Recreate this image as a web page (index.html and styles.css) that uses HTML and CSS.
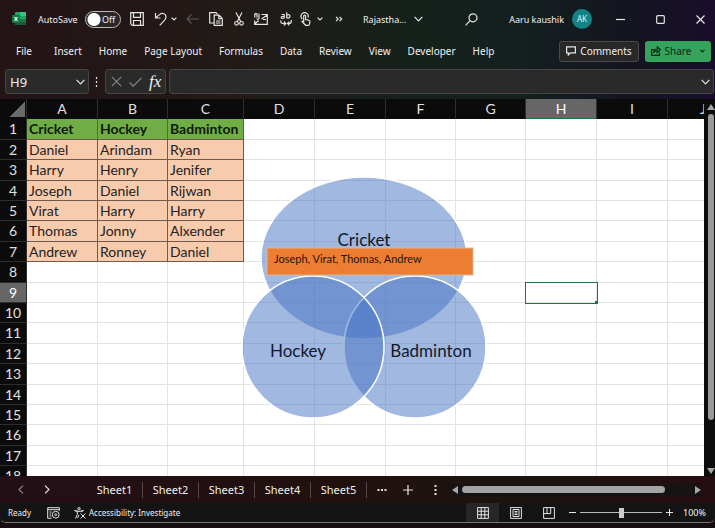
FILE: index.html
```html
<!DOCTYPE html>
<html lang="en">
<head>
    <meta charset="UTF-8">
    <meta name="viewport" content="width=device-width, initial-scale=1.0">
    <title>Rajastha... - Excel</title>
    <link rel="stylesheet" href="styles.css">
</head>
<body>
    <div class="window">
        <header class="title-bar">
            <svg class="logo" width="14" height="14" viewBox="0 0 14 14">
                <rect x="3" y="0" width="11" height="13" rx="1" fill="#21a366"/>
                <rect x="8" y="0" width="6" height="4" fill="#33c481"/>
                <rect x="3" y="7" width="11" height="6" fill="#185c37"/>
                <rect x="8" y="7" width="6" height="3" fill="#107c41"/>
                <rect x="0" y="3" width="8" height="8" rx="1" fill="#107c41"/>
                <path d="M2.5 5l3 4M5.5 5l-3 4" stroke="#fff" fill="none"/>
            </svg>
            <label class="autosave" for="autosave">AutoSave</label>
            <span class="toggle">
                <input type="checkbox" id="autosave">
                <span>Off</span>
            </span>
            <div class="quick-tools">
                <button type="button" aria-label="Save"><svg width="14" height="14" viewBox="0 0 14 14"><path d="M.7.7h12.6v12.6H2.2L.7 11.8zM3.5.7v4.6h7V.7M3.5 13.3V8.5h7v4.8"/></svg></button>
                <button type="button" class="undo" aria-label="Undo"><svg width="14" height="14" viewBox="0 0 14 14"><path d="M1.5 1v5h5M1.7 5.8L5.5 2.6C8 .5 12 1.500 12 5c0 2-1 3-2.200 4.200L5.700 13.300"/></svg></button>
                <button type="button" class="drop" aria-label="Undo list"><svg width="6" height="6" viewBox="0 0 6 6"><path d="M.6 1.600l2.400 2.400 2.400-2.400"/></svg></button>
                <button type="button" class="faded" aria-label="Back"><svg width="13" height="14" viewBox="0 0 13 14"><path d="M13 7H1M5.500 2.500L1 7l4.500 4.500"/></svg></button>
                <button type="button" aria-label="Copy"><svg width="14" height="14" viewBox="0 0 14 14"><path d="M5 11H.7V.7H7l1.500 1.500M5.200 3.200h4.800l3.300 3.300v6.800H5.200zM9.800 3.300v3.400h3.400M7 9h4.500M7 11h4.500"/></svg></button>
                <button type="button" class="cut" aria-label="Cut"><svg width="10" height="14" viewBox="0 0 10 14"><path d="M2 .5l4.700 9M8 .5l-4.700 9"/><circle cx="2.500" cy="11.300" r="1.800"/><circle cx="7.500" cy="11.300" r="1.800"/></svg></button>
                <button type="button" aria-label="Mail"><svg width="14" height="12" viewBox="0 0 14 12"><path d="M7.500 1.500h5.800v9.800H.7V7.500M7.500 6L13.300 2M.7 11l4-3.500M9 6.500h3M.8 4.500V1.500C.8.200 3 .2 3 1.500v3M5 .5v4.500c0 1.500-2.200 1.500-2.200.500"/></svg></button>
                <button type="button" class="replace" aria-label="Replace"><svg width="12" height="14" viewBox="0 0 12 14"><path d="M1.500 2.500h2.700v4M4.200 4.500H2.500C.8 4.500.8 6.500 2.500 6.500c1 0 1.700-.5 1.700-1.200M6.700.3v6M6.700 4c0-2 3.300-2 3.300.3s-3.300 2.300-3.300.3M1 8.500c-.6 2 .2 3 1.800 3h2.700M3.800 9.500l2 2-2 2M11.200 8v1.500c0 1.300-.8 2-2 2H7.700M9.300 9.700l-1.800 1.800 1.800 1.800"/></svg></button>
                <button type="button" class="touch" aria-label="Touch mode"><svg width="11" height="14" viewBox="0 0 11 14"><path d="M2.300 7A3.600 3.600 0 1 1 8 5.500M3.700 9V4c0-1.300 1.900-1.300 1.900 0v3.500l3 .7c1 .3 1.500.8 1.400 1.800l-.5 2.200c-.2.700-.6 1.100-1.300 1.100H5.700L2 9.700c.3-.7 1-.9 1.700-.3z"/></svg></button>
                <button type="button" class="drop touch-drop" aria-label="Touch mode list"><svg width="6" height="6" viewBox="0 0 6 6"><path d="M.6 1.600l2.400 2.400 2.400-2.400"/></svg></button>
                <button type="button" class="more" aria-label="More commands"><svg width="8" height="6" viewBox="0 0 8 6"><path d="M1 .8l2.200 2.200L1 5.200M4.500 .8l2.200 2.200-2.200 2.200"/></svg></button>
            </div>
            <button type="button" class="file-name">Rajastha...
                <svg width="9" height="6" viewBox="0 0 9 6"><path d="M.6.800l3.900 4 3.900-4"/></svg>
            </button>
            <div class="title-end">
                <button type="button" aria-label="Search"><svg width="13" height="13" viewBox="0 0 13 13"><circle cx="8" cy="4.800" r="4"/><path d="M5 7.700L.6 12.300"/></svg></button>
                <span class="user">Aaru kaushik</span>
                <span class="avatar">AK</span>
                <button type="button" class="win" aria-label="Minimize"><svg width="9" height="9" viewBox="0 0 9 9"><path d="M0 4.500h9"/></svg></button>
                <button type="button" class="win" aria-label="Maximize"><svg width="9" height="9" viewBox="0 0 9 9"><rect x=".7" y=".7" width="7.600" height="7.600" rx="1"/></svg></button>
                <button type="button" class="win" aria-label="Close"><svg width="9" height="9" viewBox="0 0 9 9"><path d="M.5.500l8 8M8.500.500l-8 8"/></svg></button>
            </div>
        </header>

        <nav class="menu">
            <a href="#">File</a>
            <a href="#">Insert</a>
            <a href="#">Home</a>
            <a href="#">Page Layout</a>
            <a href="#">Formulas</a>
            <a href="#">Data</a>
            <a href="#">Review</a>
            <a href="#">View</a>
            <a href="#">Developer</a>
            <a href="#">Help</a>
            <div class="menu-end">
                <button type="button" class="comments"><svg width="10" height="10" viewBox="0 0 10 10"><path d="M.6.800h8.800v6H4.500L2.300 9V6.800H.6z"/></svg>Comments</button>
                <button type="button" class="share"><svg width="10" height="10" viewBox="0 0 10 10"><path d="M3 3.500H.7v5.900h7.800V6.500M2.500 6.500C3 4 4.500 3 6.300 3V.8l3 2.900-3 2.800V4.800c-1.500 0-2.800.5-3.800 1.700z"/></svg>Share<svg class="share-drop" width="5" height="4" viewBox="0 0 5 4"><path d="M.5.800l2 2 2-2"/></svg></button>
            </div>
        </nav>

        <div class="formula-bar">
            <div class="name-box">
                <input type="text" value="H9" aria-label="Name box">
                <svg width="9" height="6" viewBox="0 0 9 6"><path d="M.6.800l3.900 4 3.900-4"/></svg>
            </div>
            <svg class="grip" width="3" height="10" viewBox="0 0 3 10"><path d="M1.500 0v2M1.500 4v2M1.500 8v2"/></svg>
            <div class="fx-box">
                <svg class="dim" width="11" height="11" viewBox="0 0 11 11"><path d="M.8.800l9.400 9.400M10.200.800L.8 10.200"/></svg>
                <svg class="dim" width="13" height="10" viewBox="0 0 13 10"><path d="M.6 5.500l3.600 3.600L12.400.800"/></svg>
                <span class="fx">fx</span>
            </div>
            <div class="formula">
                <input type="text" aria-label="Formula">
                <svg width="9" height="6" viewBox="0 0 9 6"><path d="M.6.800l3.900 4 3.900-4"/></svg>
            </div>
        </div>

        <main class="sheet">
            <div class="grid-area">
                <table class="cells">
                    <colgroup>
                        <col class="w-num"><col class="w-71"><col class="w-70"><col class="w-76"><col class="w-71"><col class="w-71"><col class="w-70"><col class="w-70"><col class="w-71"><col class="w-71"><col class="w-71">
                    </colgroup>
                    <thead>
                        <tr><th class="corner"></th><th>A</th><th>B</th><th>C</th><th>D</th><th>E</th><th>F</th><th>G</th><th class="current">H</th><th>I</th><th>J</th></tr>
                    </thead>
                    <tbody>
                        <tr class="heading"><th>1</th><td>Cricket</td><td>Hockey</td><td>Badminton</td><td></td><td></td><td></td><td></td><td></td><td></td><td></td></tr>
                        <tr class="names"><th>2</th><td>Daniel</td><td>Arindam</td><td>Ryan</td><td></td><td></td><td></td><td></td><td></td><td></td><td></td></tr>
                        <tr class="names"><th>3</th><td>Harry</td><td>Henry</td><td>Jenifer</td><td></td><td></td><td></td><td></td><td></td><td></td><td></td></tr>
                        <tr class="names"><th>4</th><td>Joseph</td><td>Daniel</td><td>Rijwan</td><td></td><td></td><td></td><td></td><td></td><td></td><td></td></tr>
                        <tr class="names"><th>5</th><td>Virat</td><td>Harry</td><td>Harry</td><td></td><td></td><td></td><td></td><td></td><td></td><td></td></tr>
                        <tr class="names"><th>6</th><td>Thomas</td><td>Jonny</td><td>Alxender</td><td></td><td></td><td></td><td></td><td></td><td></td><td></td></tr>
                        <tr class="names"><th>7</th><td>Andrew</td><td>Ronney</td><td>Daniel</td><td></td><td></td><td></td><td></td><td></td><td></td><td></td></tr>
                        <tr><th>8</th><td></td><td></td><td></td><td></td><td></td><td></td><td></td><td></td><td></td><td></td></tr>
                        <tr><th class="current">9</th><td></td><td></td><td></td><td></td><td></td><td></td><td></td><td class="selected"></td><td></td><td></td></tr>
                        <tr><th>10</th><td></td><td></td><td></td><td></td><td></td><td></td><td></td><td></td><td></td><td></td></tr>
                        <tr><th>11</th><td></td><td></td><td></td><td></td><td></td><td></td><td></td><td></td><td></td><td></td></tr>
                        <tr><th>12</th><td></td><td></td><td></td><td></td><td></td><td></td><td></td><td></td><td></td><td></td></tr>
                        <tr><th>13</th><td></td><td></td><td></td><td></td><td></td><td></td><td></td><td></td><td></td><td></td></tr>
                        <tr><th>14</th><td></td><td></td><td></td><td></td><td></td><td></td><td></td><td></td><td></td><td></td></tr>
                        <tr><th>15</th><td></td><td></td><td></td><td></td><td></td><td></td><td></td><td></td><td></td><td></td></tr>
                        <tr><th>16</th><td></td><td></td><td></td><td></td><td></td><td></td><td></td><td></td><td></td><td></td></tr>
                        <tr><th>17</th><td></td><td></td><td></td><td></td><td></td><td></td><td></td><td></td><td></td><td></td></tr>
                        <tr><th>18</th><td></td><td></td><td></td><td></td><td></td><td></td><td></td><td></td><td></td><td></td></tr>
                    </tbody>
                </table>
                <!-- venn diagram floating over the cells -->
                <svg class="venn" width="246" height="244" viewBox="0 0 246 244">
                    <g class="sets">
                        <ellipse cx="123" cy="82" rx="103" ry="81"/>
                        <circle cx="174" cy="171" r="71"/>
                        <circle cx="72" cy="171" r="71"/>
                    </g>
                    <text x="123" y="70">Cricket</text>
                    <rect class="note" x="26" y="72" width="206" height="27"/>
                    <text class="note-text" x="33" y="87">Joseph, Virat, Thomas, Andrew</text>
                    <text x="57" y="181">Hockey</text>
                    <text x="190" y="181">Badminton</text>
                </svg>
            </div>
            <div class="v-scroll">
                <svg width="8" height="6" viewBox="0 0 8 6"><path d="M4 0l4 6H0z"/></svg>
                <div class="v-thumb"></div>
                <svg width="8" height="6" viewBox="0 0 8 6"><path d="M4 6l4-6H0z"/></svg>
            </div>
        </main>

        <div class="tabs">
            <button type="button" class="prev" aria-label="Previous sheet"><svg width="6" height="9" viewBox="0 0 6 9"><path d="M5 .6L1 4.500l4 3.900"/></svg></button>
            <button type="button" class="next" aria-label="Next sheet"><svg width="6" height="9" viewBox="0 0 6 9"><path d="M1 .6l4 3.900-4 3.900"/></svg></button>
            <div class="tab-list">
                <button type="button">Sheet1</button>
                <button type="button">Sheet2</button>
                <button type="button">Sheet3</button>
                <button type="button">Sheet4</button>
                <button type="button">Sheet5</button>
            </div>
            <button type="button" class="dots" aria-label="All sheets"><svg width="10" height="10" viewBox="0 0 10 10"><path class="fat" d="M.5 5h2M4 5h2M7.500 5h2"/></svg></button>
            <button type="button" aria-label="New sheet"><svg width="10" height="10" viewBox="0 0 10 10"><path d="M0 5h10M5 0v10"/></svg></button>
            <button type="button" class="dots-v" aria-label="Resize"><svg width="3" height="10" viewBox="0 0 3 10"><path class="fat" d="M1.500 0v2M1.500 4v2M1.500 8v2"/></svg></button>
            <div class="h-scroll">
                <svg width="6" height="8" viewBox="0 0 6 8"><path d="M0 4l6-4v8z"/></svg>
                <div class="h-thumb"></div>
                <svg width="6" height="8" viewBox="0 0 6 8"><path d="M6 4L0 0v8z"/></svg>
            </div>
        </div>

        <footer class="status">
            <span>Ready</span>
            <svg class="macro" width="13" height="12" viewBox="0 0 13 12"><path d="M4.500 11.300H.7V.7h11.600v3M.7 2.700h11.600M2.500 5h2M2.500 7h1.500M2.500 9h2"/><circle cx="8.700" cy="7.700" r="3.400"/><circle cx="8.700" cy="7.700" r="1"/></svg>
            <svg width="12" height="12" viewBox="0 0 12 12"><circle cx="5" cy="1.700" r="1.200"/><path d="M.5 3.500l2.800 1v3L1.500 11.500M.5 3.500l4.500 1 4.500-1-2.500 1.500M3.500 11L5 8M6.500 6.500l5 5M11.500 6.500l-5 5"/></svg>
            <span class="access">Accessibility: Investigate</span>
            <div class="status-end">
                <button type="button" class="view on" aria-label="Normal"><svg width="12" height="12" viewBox="0 0 12 12"><path d="M.6.600h10.800v10.800H.6zM.6 4.200h10.800M.6 7.800h10.800M4.200.600v10.800M7.800.600v10.800"/></svg></button>
                <button type="button" class="view" aria-label="Page layout"><svg width="12" height="12" viewBox="0 0 12 12"><path d="M.6.600h10.800v10.800H.6zM3 2.500h6v7H3zM4.500 4.500h3M4.500 6h3M4.500 7.500h3"/></svg></button>
                <button type="button" class="view" aria-label="Page break preview"><svg width="12" height="12" viewBox="0 0 12 12"><path d="M.6.600h10.800v10.800H.6zM4 .6v6M7.700.600v6M.6 6.600h7.100"/></svg></button>
                <button type="button" class="step" aria-label="Zoom out"><svg width="7" height="7" viewBox="0 0 7 7"><path d="M0 3.500h7"/></svg></button>
                <input type="range" class="zoom" min="0" max="100" value="50" aria-label="Zoom">
                <button type="button" class="step" aria-label="Zoom in"><svg width="7" height="7" viewBox="0 0 7 7"><path d="M0 3.500h7M3.500 0v7"/></svg></button>
                <span class="percent">100%</span>
            </div>
        </footer>
    </div>
</body>
</html>
```
FILE: styles.css
```css
* {
    box-sizing: border-box;
}

body {
    margin: 0;
    height: 100vh;
    padding-bottom: 5px;
    overflow: hidden;
    background-color: #160d10;
    font-family: "Noto Sans", "Open Sans", sans-serif;
    font-size: 11px;
    color: #f0f0f0;
}

.window {
    display: flex;
    flex-direction: column;
    height: 100%;
    border-bottom: 1px solid #777;
    border-radius: 0 0 6px 6px;
    overflow: hidden;
    background: linear-gradient(90deg, #241416 0%, #211a17 32%, #16211b 58%, #14201f 72%, #14151f 88%, #190d2c 100%);
}

button {
    display: flex;
    align-items: center;
    justify-content: center;
    padding: 0;
    border: none;
    background: none;
    color: inherit;
    font: inherit;
    cursor: pointer;
}

input {
    min-width: 0;
    border: none;
    outline: none;
    background: none;
    color: inherit;
    font: inherit;
}

svg {
    flex: none;
    fill: none;
    stroke: #e4e4e4;
    stroke-width: 1.2;
}

/* title bar */
.title-bar {
    display: flex;
    align-items: center;
    height: 38px;
    padding-left: 12px;
    font-size: 9px;
}

.logo {
    stroke: none;
}

.autosave {
    width: 46px;
    margin-left: 12px;
    white-space: nowrap;
}

.toggle {
    position: relative;
    margin-left: 1px;
    width: 36px;
    height: 17px;
}

.toggle input {
    appearance: none;
    display: block;
    width: 36px;
    height: 17px;
    margin: 0;
    border: 1px solid #bbb;
    border-radius: 9px;
    background: radial-gradient(circle at 8px 50%, #fff 6px, #2b2627 7px);
}

.toggle span {
    position: absolute;
    left: 17px;
    top: 2px;
    line-height: 13px;
    pointer-events: none;
}

.quick-tools {
    display: flex;
    align-items: center;
    gap: 10px;
    margin-left: 9px;
}

.quick-tools .drop {
    margin-left: -7px;
}

.quick-tools .faded {
    margin-left: -1px;
}

.quick-tools .replace,
.quick-tools .more {
    margin-left: 2px;
}

.quick-tools .cut {
    margin-left: 1px;
}

.quick-tools .touch {
    margin-left: -2px;
}

.quick-tools .touch-drop {
    margin-left: -4px;
}

.faded svg {
    stroke: #5b5654;
}

.file-name {
    gap: 8px;
    margin-left: 20px;
}

.title-end {
    display: flex;
    align-items: center;
    margin-left: auto;
    padding-right: 10px;
}

.user {
    margin-left: 31px;
    white-space: nowrap;
}

.avatar {
    width: 20px;
    margin-left: 8px;
    border-radius: 50%;
    background-color: #118488;
    font-size: 8px;
    line-height: 20px;
    text-align: center;
}

.win {
    margin-left: 31px;
}

.avatar + .win {
    margin-left: 24px;
}

/* ribbon menu */
.menu {
    display: flex;
    align-items: center;
    gap: 17px;
    height: 28px;
    padding: 0 4px 2px 16px;
    font-size: 10px;
}

.menu a {
    color: inherit;
    text-decoration: none;
    white-space: nowrap;
}

.menu a:first-child {
    margin-right: 5px;
}

.menu-end {
    display: flex;
    gap: 6px;
    margin-left: auto;
}

.comments,
.share {
    height: 21px;
    border-radius: 3px;
}

.comments {
    gap: 4px;
    width: 80px;
    border: 1px solid #4a4a4a;
    background-color: #282828;
}

.share {
    gap: 4px;
    width: 66px;
    background-color: #35a35c;
    color: #0b2a16;
}

.share svg {
    stroke: #0b2a16;
}

.share-drop {
    margin-left: 5px;
}

/* formula bar */
.formula-bar {
    display: flex;
    align-items: center;
    height: 33px;
    padding: 0 1px 2px 5px;
}

.name-box,
.fx-box,
.formula {
    display: flex;
    align-items: center;
    height: 25px;
    border: 1px solid #454343;
    border-radius: 3px;
    background-color: #2a2a2b;
}

.name-box {
    width: 84px;
    padding: 0 3px;
}

.name-box input {
    flex: 1;
    padding: 0 1px;
    font-size: 13px;
}

.grip {
    margin: 0 7px 0 6px;
}

.fx-box {
    gap: 7px;
    width: 61px;
    padding-left: 5px;
}

.dim {
    stroke: #858585;
}

.fx {
    font-family: "Liberation Serif", serif;
    font-size: 17px;
    font-style: italic;
}

.formula {
    flex: 1;
    margin-left: 3px;
    padding-right: 3px;
}

.formula input {
    flex: 1;
}

/* sheet */
.sheet {
    display: flex;
    flex: 1;
    min-height: 0;
    background-color: #0c0c0c;
}

.grid-area {
    position: relative;
    flex: 1;
    min-width: 0;
    overflow: hidden;
}

.cells {
    width: 739px;
    table-layout: fixed;
    border-collapse: separate;
    border-spacing: 0;
    background-color: #fff;
    color: #222;
    font-family: Lato, "Noto Sans", sans-serif;
    font-size: 14px;
    line-height: 18px;
}

.w-num { width: 27px; }
.w-70 { width: 70px; }
.w-71 { width: 71px; }
.w-76 { width: 76px; }

.cells tr {
    height: 20px;
}

.cells tbody tr:nth-child(5n+1),
.cells tbody tr:nth-child(5n+3) {
    height: 21px;
}

.cells th,
.cells td {
    padding: 0;
    border-right: 1px solid #e3e3e3;
    border-bottom: 1px solid #e3e3e3;
    white-space: nowrap;
}

.cells th {
    border-color: #2e2e2e;
    background-color: #0b0b0b;
    color: #e0e0e0;
    font-weight: normal;
}

.cells thead th {
    border-bottom-color: #0b0b0b;
}

.cells .corner {
    background: linear-gradient(135deg, #0b0b0b 50%, #6b6b6b 50%) 9px 3px / 16px 15px no-repeat #0b0b0b;
}

.cells th.current {
    background-color: #666;
    color: #fff;
}

.cells thead th.current {
    border-bottom-color: #217346;
}

.heading td:nth-child(-n+4),
.names td:nth-child(-n+4) {
    padding-left: 2px;
    border-color: #6f5a4c;
    background-color: #f8cbad;
}

.heading td:nth-child(-n+4) {
    background-color: #70ad47;
    color: #0d1a06;
    font-weight: bold;
}

.cells td.selected {
    position: relative;
    outline: 1px solid #217346;
}

.cells td.selected::after {
    content: "";
    position: absolute;
    right: -2px;
    bottom: -2px;
    width: 3px;
    height: 3px;
    background-color: #217346;
}

.venn {
    position: absolute;
    left: 241px;
    top: 77px;
    font-family: Lato, "Noto Sans", sans-serif;
}

.sets {
    fill: #4472c4;
    fill-opacity: 0.5;
    stroke: #fff;
    stroke-width: 1.5;
}

.venn text {
    fill: #10182c;
    stroke: none;
    font-size: 17px;
    text-anchor: middle;
}

.venn .note {
    fill: #ed7d31;
    stroke: #d9b79d;
    stroke-width: 1;
}

.venn .note-text {
    fill: #2a1408;
    font-size: 11px;
    text-anchor: start;
}

.v-scroll {
    display: flex;
    flex-direction: column;
    align-items: center;
    width: 11px;
    padding: 5px 0 2px 3px;
}

.v-scroll svg,
.h-scroll svg {
    fill: #a5a5a5;
    stroke: none;
}

.v-thumb {
    width: 6px;
    height: 306px;
    margin: 4px 0 auto;
    border-radius: 4px;
    background-color: #999;
}

/* sheet tabs */
.tabs {
    display: flex;
    align-items: center;
    height: 27px;
    padding: 0 14px 0 18px;
    background: linear-gradient(90deg, #240f17, #21110f 45%, #1c1410 75%, #260d12);
}

.prev svg {
    stroke: #8d8286;
}

.next {
    margin-left: 20px;
}

.tab-list {
    display: flex;
    margin-left: 37px;
}

.tab-list button {
    width: 56px;
    height: 16px;
    border-right: 1px solid #55464a;
}

.fat {
    stroke-width: 2;
}

.dots {
    margin: 0 16px 0 10px;
}

.dots-v {
    margin: 0 15px 0 21px;
}

.h-scroll {
    display: flex;
    flex: 1;
    align-items: center;
    height: 12px;
    background-color: #161314;
}

.h-thumb {
    flex: 1;
    height: 7px;
    margin: 0 30px 0 4px;
    border-radius: 4px;
    background-color: #a3a3a3;
}

/* status bar */
.status {
    display: flex;
    align-items: center;
    height: 19px;
    padding-left: 8px;
    background-color: #141414;
    font-size: 8px;
}

.status svg {
    stroke-width: 1;
}

.macro {
    margin: 0 14px 0 16px;
}

.access {
    margin-left: 3px;
    white-space: nowrap;
}

.status-end {
    display: flex;
    align-items: center;
    height: 100%;
    margin-left: auto;
    padding-right: 9px;
}

.view {
    width: 33px;
    height: 100%;
}

.view.on {
    background-color: #262626;
}

.step {
    margin: 0 4px;
}

.zoom {
    appearance: none;
    width: 82px;
    height: 11px;
    margin: 0;
    background: linear-gradient(#bbb, #bbb) center / 100% 1px no-repeat;
}

.zoom::-webkit-slider-thumb {
    appearance: none;
    width: 5px;
    height: 10px;
    background-color: #ccc;
}

.percent {
    margin-left: 6px;
    font-size: 9px;
}
```
